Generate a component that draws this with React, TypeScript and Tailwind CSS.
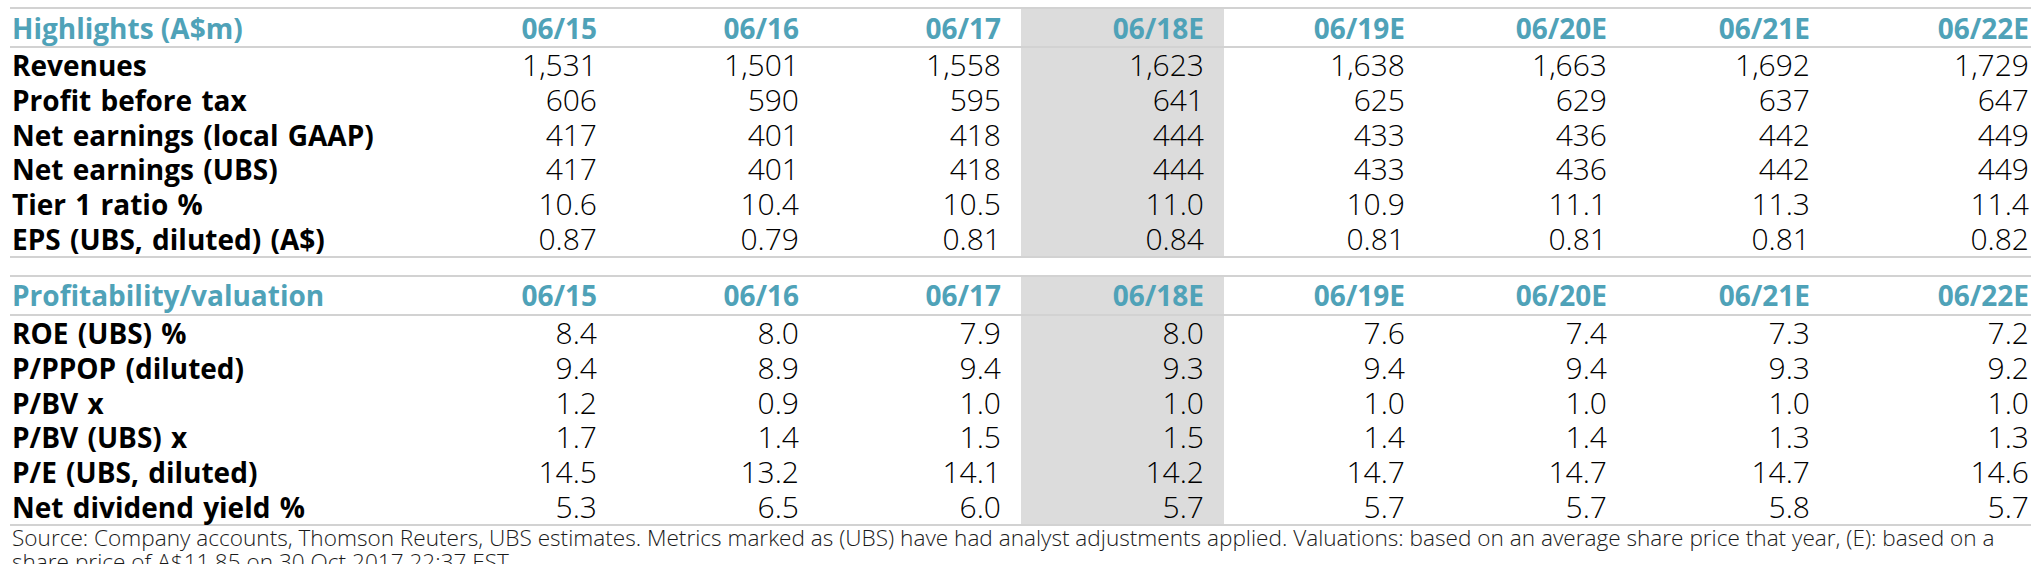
import React from "react";

type Row = { label: string; values: string[] };

const years = ["06/15", "06/16", "06/17", "06/18E", "06/19E", "06/20E", "06/21E", "06/22E"];

const highlights: Row[] = [
  { label: "Revenues", values: ["1,531", "1,501", "1,558", "1,623", "1,638", "1,663", "1,692", "1,729"] },
  { label: "Profit before tax", values: ["606", "590", "595", "641", "625", "629", "637", "647"] },
  { label: "Net earnings (local GAAP)", values: ["417", "401", "418", "444", "433", "436", "442", "449"] },
  { label: "Net earnings (UBS)", values: ["417", "401", "418", "444", "433", "436", "442", "449"] },
  { label: "Tier 1 ratio %", values: ["10.6", "10.4", "10.5", "11.0", "10.9", "11.1", "11.3", "11.4"] },
  { label: "EPS (UBS, diluted) (A$)", values: ["0.87", "0.79", "0.81", "0.84", "0.81", "0.81", "0.81", "0.82"] },
];

const valuation: Row[] = [
  { label: "ROE (UBS) %", values: ["8.4", "8.0", "7.9", "8.0", "7.6", "7.4", "7.3", "7.2"] },
  { label: "P/PPOP (diluted)", values: ["9.4", "8.9", "9.4", "9.3", "9.4", "9.4", "9.3", "9.2"] },
  { label: "P/BV x", values: ["1.2", "0.9", "1.0", "1.0", "1.0", "1.0", "1.0", "1.0"] },
  { label: "P/BV (UBS) x", values: ["1.7", "1.4", "1.5", "1.5", "1.4", "1.4", "1.3", "1.3"] },
  { label: "P/E (UBS, diluted)", values: ["14.5", "13.2", "14.1", "14.2", "14.7", "14.7", "14.7", "14.6"] },
  { label: "Net dividend yield %", values: ["5.3", "6.5", "6.0", "5.7", "5.7", "5.7", "5.8", "5.7"] },
];

const grid = "grid grid-cols-[405px_202px_202px_202px_203px_201px_202px_203px_201px]";

const cellPad = (i: number) => (i === 7 ? "pr-[2px]" : "pr-[20px]");

const Section = ({ title, rows }: { title: string; rows: Row[] }) => {
  return (
    <div className="border-t-2 border-b-2 border-[#d2d2d2]">
      <div className={`${grid} h-[39px] items-center border-b-2 border-[#d2d2d2] text-[#4fa2b8] font-bold text-[28px] leading-[34px]`}>
        <div className="pl-[2px] h-full flex items-center">{title}</div>
        {years.map((y, i) => (
          <div
            key={y}
            className={`h-full flex items-center justify-end ${cellPad(i)} ${i === 3 ? "bg-[#dcdcdc]" : ""}`}
          >
            {y}
          </div>
        ))}
      </div>
      {rows.map((r) => (
        <div key={r.label} className={`${grid} h-[34.67px] leading-[34px]`}>
          <div className="pl-[2px] flex items-center font-bold text-black text-[28px] [word-spacing:2px] whitespace-nowrap">
            {r.label}
          </div>
          {r.values.map((v, i) => (
            <div
              key={i}
              className={`flex items-center justify-end font-light text-black text-[30px] ${cellPad(i)} ${i === 3 ? "bg-[#dcdcdc]" : ""}`}
            >
              {v}
            </div>
          ))}
        </div>
      ))}
    </div>
  );
};

export default function App() {
  return (
    <div className="w-[2043px] h-[564px] overflow-hidden bg-white font-['Open_Sans',sans-serif]">
      <div className="ml-[10px] w-[2021px] pt-[7px] flex flex-col">
        <Section title="Highlights (A$m)" rows={highlights} />
        <div className="h-[17px]" />
        <Section title="Profitability/valuation" rows={valuation} />
        <p className="w-[2008px] pl-[2px] text-[22.6px] leading-[24px] font-light text-[#1a1a1a]">
          Source: Company accounts, Thomson Reuters, UBS estimates. Metrics marked as (UBS) have had analyst adjustments applied. Valuations: based on an average share price that year, (E): based on a share price of A$11.85 on 30 Oct 2017 22:37 EST
        </p>
      </div>
    </div>
  );
}
